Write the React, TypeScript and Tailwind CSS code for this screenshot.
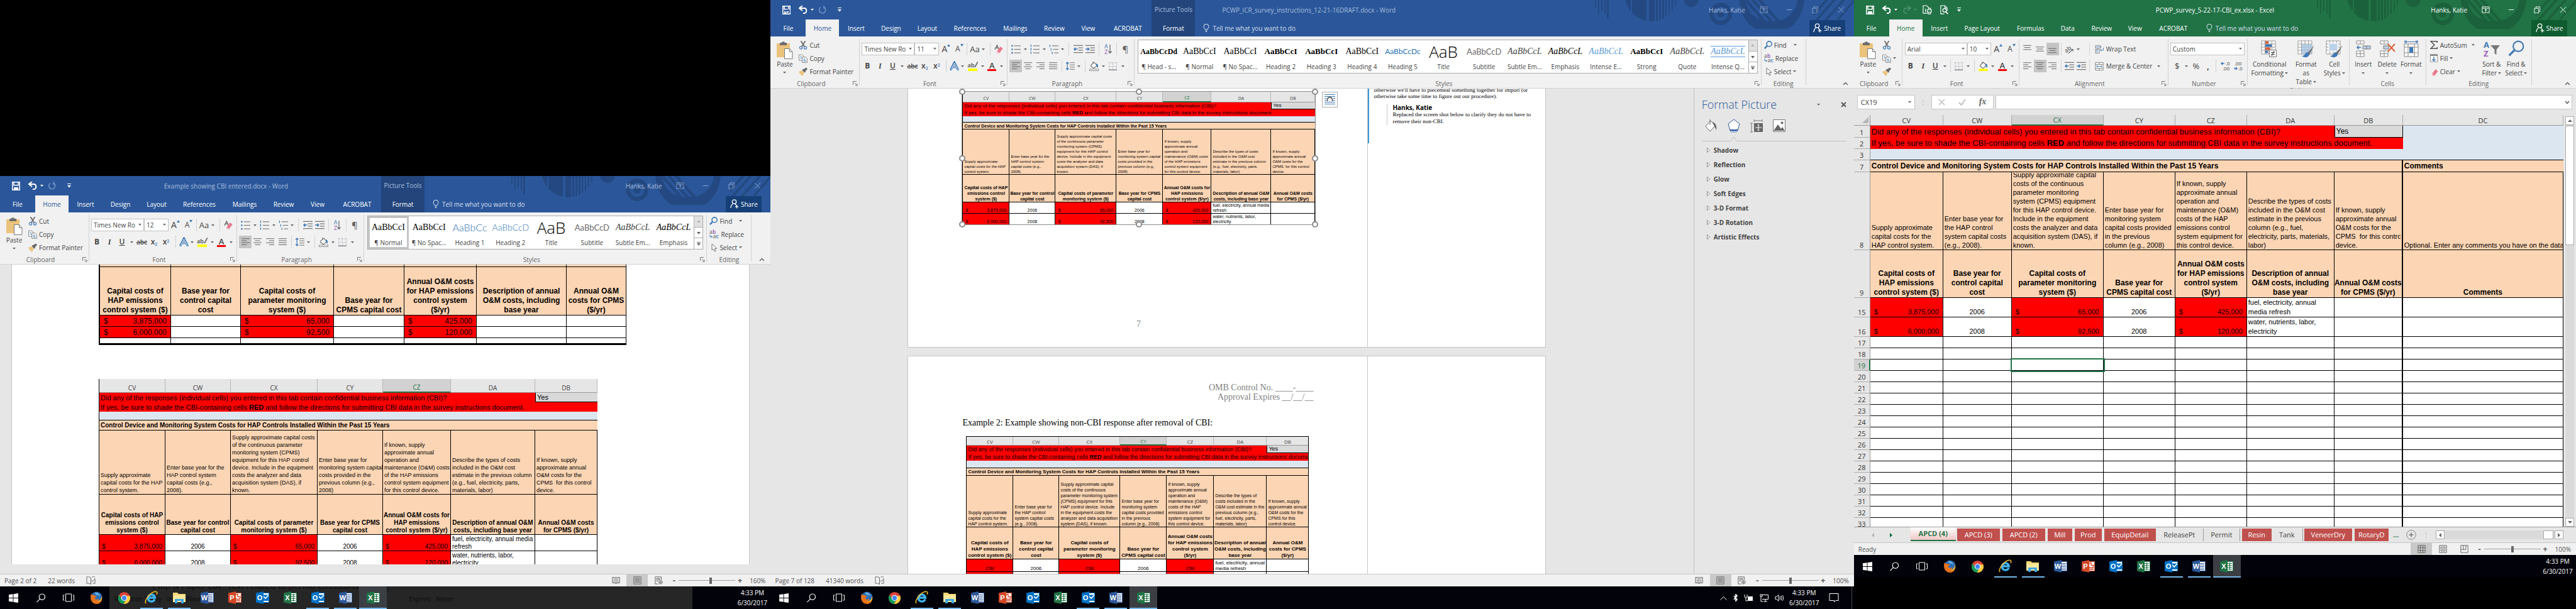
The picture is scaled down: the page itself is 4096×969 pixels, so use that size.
import React from "react";

type Kids = { children?: React.ReactNode };

/* ---------- small drawings ---------- */

const Svg = ({ w = 14, h = 14, vb = "0 0 16 16", children }: Kids & { w?: number; h?: number; vb?: string }) => (
  <svg width={w} height={h} viewBox={vb} fill="none" className="shrink-0" aria-hidden="true">
    {children}
  </svg>
);

const Caret = ({ color = "#6a6a6a" }: { color?: string }) => (
  <Svg w={5} h={3} vb="0 0 5 3">
    <path d="M0 0h5L2.5 3z" fill={color} />
  </Svg>
);

const Launcher = () => (
  <button aria-label="More options" className="flex h-[14px] w-3 items-center justify-center">
    <Svg w={8} h={8} vb="0 0 8 8">
      <path d="M.5 6V.5H6M3 3l3.5 3.5M7 4v3.2H4" stroke="#777" />
    </Svg>
  </button>
);

const SaveIcon = ({ sync = false }) => (
  <Svg w={13} h={14} vb="0 0 13 14">
    <path d="M.8.8h11.4v12.4H.8zM3 .8v5h7v-5" stroke="#fff" strokeWidth="1.5" />
    <path d="M3 9h7v4H3z" fill="#fff" />
    {sync && <circle cx="8.5" cy="9" r="3" stroke="#2b579a" strokeWidth="1.2" />}
  </Svg>
);

const UndoIcon = () => (
  <Svg w={14} h={13} vb="0 0 14 13">
    <path d="M2 4h6.5c5 0 5 8 .5 8H7" stroke="#fff" strokeWidth="2" />
    <path d="M6 0L1 4l5 4" stroke="#fff" strokeWidth="2" />
  </Svg>
);

const RepeatIcon = () => (
  <Svg w={13} h={13} vb="0 0 13 13">
    <path d="M4 2.5a5 5 0 1 0 5-.2M9 0v4h3" stroke="#6f90c4" strokeWidth="1.6" />
  </Svg>
);

const RedoIcon = () => (
  <Svg w={14} h={13} vb="0 0 14 13">
    <path d="M12 4H6c-5 0-5 8 0 8h1M8 0l5 4-5 4" stroke="#4f9270" strokeWidth="1.6" />
  </Svg>
);

const PrintIcon = () => (
  <Svg w={15} h={15}>
    <path d="M8 14H1V1h6l3 3v3M5 6v6M8 8h7v4H8zM9.500 12h4v3h-4zM9.500 5.500h4V8" stroke="#fff" strokeWidth="1.2" />
  </Svg>
);

const PreviewIcon = () => (
  <Svg w={15} h={15}>
    <path d="M8 15H2V1h7l4 4v5M9 1v4h4" stroke="#fff" strokeWidth="1.2" />
    <circle cx="8.500" cy="9" r="3" stroke="#fff" strokeWidth="1.4" />
    <path d="M10.500 11.500l4 3.500" stroke="#fff" strokeWidth="1.8" />
  </Svg>
);

const CustomizeIcon = () => (
  <Svg w={6} h={7} vb="0 0 6 7">
    <path d="M0 .5h6" stroke="#fff" />
    <path d="M0 3h6L3 6.500z" fill="#fff" />
  </Svg>
);

const BulbIcon = () => (
  <Svg w={10} h={13} vb="0 0 10 13">
    <path d="M3.200 9C3 7.500 1 6.500 1 4.300a4 4 0 0 1 8 0C9 6.500 7 7.500 6.800 9zM3.500 11h3M4 12.500h2" stroke="#dfe7f3" />
  </Svg>
);

const ShareIcon = () => (
  <Svg w={14} h={15} vb="0 0 14 15">
    <circle cx="6.500" cy="4" r="3.200" stroke="#fff" strokeWidth="1.300" />
    <path d="M1 14c0-3.500 1.500-5.500 3.500-6.500M8 7l1.500 3M10.500 9v5.500M7.800 11.800h5.500" stroke="#fff" strokeWidth="1.300" />
  </Svg>
);

const PasteIcon = () => (
  <Svg w={26} h={28} vb="0 0 26 28">
    <path d="M0 3h21v22H0z" fill="#ecc37c" />
    <path d="M5 2h3c0-2.500 5-2.500 5 0h3v4H5z" fill="#6d6d6d" />
    <path d="M12.500 11.500h8l4.500 5v11H12.500z" fill="#fff" stroke="#7a7a7a" />
    <path d="M20.500 11.500v5H25" stroke="#7a7a7a" />
  </Svg>
);

const CutIcon = () => (
  <Svg>
    <path d="M4 0l6.500 10.500M12 0L5.500 10.500" stroke="#6b6b6b" strokeWidth="2" />
    <circle cx="4" cy="12.500" r="2.400" stroke="#3f78b5" strokeWidth="1.400" />
    <circle cx="12" cy="12.500" r="2.400" stroke="#3f78b5" strokeWidth="1.400" />
  </Svg>
);

const CopyIcon = () => (
  <Svg>
    <path d="M.5 1.500h6l2 2v8h-8z" fill="#fff" stroke="#777" />
    <path d="M6.500 5.500h6l3 3v7h-9z" fill="#fff" stroke="#777" />
    <path d="M2.500 5h3M2.500 7.500h3M8.500 9h3M8.500 11h5M8.500 13h5" stroke="#3f78b5" />
  </Svg>
);

const PainterIcon = () => (
  <Svg>
    <path d="M0 8l6-2 4 4-3 6c-3-2-5-4-7-8z" fill="#ecc37c" />
    <path d="M6 5l5 5 2-2-1-1 4-4-2.500-2.500-4 3L8.500 3z" fill="#666" />
  </Svg>
);

const EraserIcon = ({ letter = true }) => (
  <Svg>
    {letter && <path d="M1 9l4-8 3 7M2.500 6h4" stroke="#6b6b6b" strokeWidth="1.500" />}
    <path d="M11 3.500l4.500 3.500-6 8L5 11.500z" fill="#e8798f" />
    <path d="M5 11.500L9.500 15l-1 1H6l-2-2z" fill="#f4b6c2" />
  </Svg>
);

const bulletRows = [2, 8, 14];
const ListIcon = ({ kind }: { kind: "bullet" | "number" | "multi" }) => (
  <Svg w={15} h={15}>
    {bulletRows.map((y, i) => (
      <g key={y}>
        <path d={kind === "multi" ? `M${5 + i * 2} ${y}h${11 - i * 2}` : `M5 ${y}h11`} stroke="#777" strokeWidth="1.200" />
        {kind === "bullet" ? (
          <circle cx="1.500" cy={y} r="1.400" fill="#3f78b5" />
        ) : (
          <path d={kind === "multi" ? `M${1.5 + i * 2} ${y - 2}v4` : `M.5 ${y - 1.5}h1v3.500`} stroke="#3f78b5" strokeWidth="1.200" />
        )}
      </g>
    ))}
  </Svg>
);

const IndentIcon = ({ out = false }) => (
  <Svg w={15} h={15}>
    <path d="M0 1.500h16M8 5.500h8M8 9.500h8M0 13.500h16" stroke="#777" strokeWidth="1.200" />
    <path d={out ? "M7 7.500H1M3.500 5L1 7.500 3.500 10" : "M0 7.500h6M3.500 5L6 7.500 3.500 10"} stroke="#3f78b5" strokeWidth="1.600" />
  </Svg>
);

const alignPaths = {
  left: "M0 1.500h16M0 5.500h10M0 9.500h16M0 13.500h10",
  center: "M0 1.500h16M3 5.500h10M0 9.500h16M3 13.500h10",
  right: "M0 1.500h16M6 5.500h10M0 9.500h16M6 13.500h10",
  justify: "M0 1.500h16M0 5.500h16M0 9.500h16M0 13.500h16",
  top: "M0 1h16M2 5h12M0 9h16",
  middle: "M0 4h16M2 8h12M0 12h16",
  bottom: "M0 7h16M2 11h12M0 15h16",
};
const AlignIcon = ({ kind }: { kind: keyof typeof alignPaths }) => (
  <Svg w={13}>
    <path d={alignPaths[kind]} stroke="#666" strokeWidth="1.200" />
  </Svg>
);

const SortIcon = () => (
  <span className="flex items-center">
    <span className="flex flex-col text-[9px] leading-[9px]">
      <span className="text-[#3f78b5]">A</span>
      <span className="text-[#8c4fb0]">Z</span>
    </span>
    <Svg w={6} h={15} vb="0 0 6 15">
      <path d="M3 0v13M.5 10.500L3 13.500l2.500-3" stroke="#666" strokeWidth="1.200" />
    </Svg>
  </span>
);

const SpacingIcon = () => (
  <Svg w={14} h={16}>
    <path d="M7 2h9M7 6h9M7 10h9M7 14h9" stroke="#777" strokeWidth="1.200" />
    <path d="M2.500 1v14M0 4l2.500-3L5 4M0 12l2.500 3L5 12" stroke="#3f78b5" strokeWidth="1.400" />
  </Svg>
);

const BucketIcon = ({ color = "#fff" }: { color?: string }) => (
  <Svg w={16} h={16}>
    <path d="M6 1v4M3 6.500L7.500 2l5 5L7 12 2.500 8z" fill="#fff" stroke="#777" strokeWidth="1.200" />
    <path d="M11 4c3 1 3.500 3 2.500 7L11 8z" fill="#3f78b5" />
    <path d="M.5 13h14v2.500H.5z" fill={color} stroke={color === "#fff" ? "#888" : color} />
  </Svg>
);

const BordersIcon = () => (
  <Svg w={13} h={13}>
    <path d="M1 0v16M8 0v16M15 0v16M0 1h16M0 8h16" stroke="#8d7c9c" strokeDasharray="1 1.500" />
    <path d="M0 15h16" stroke="#666" strokeWidth="1.400" />
  </Svg>
);

const SearchIcon = ({ big = false }) => (
  <Svg w={big ? 26 : 13} h={big ? 26 : 13}>
    <circle cx="10" cy="6" r="5" stroke="#3f78b5" strokeWidth={big ? 1.3 : 2} />
    <path d="M6.500 9.500L1 15" stroke="#3f78b5" strokeWidth={big ? 2 : 3} />
  </Svg>
);

const ReplaceIcon = () => (
  <Svg w={15} h={15}>
    <text x="0" y="7" fontSize="9" fontFamily="Open Sans" fontWeight="600" fill="#777">a<tspan fill="#8c4fb0">b</tspan></text>
    <text x="6" y="15" fontSize="9" fontFamily="Open Sans" fontWeight="600" fill="#777">a<tspan fill="#3f78b5">c</tspan></text>
    <path d="M1 9v3.500h4M3 11l2 1.500L3 14" stroke="#3f78b5" />
  </Svg>
);

const PointerIcon = () => (
  <Svg w={10} h={14} vb="0 0 10 14">
    <path d="M1 1v10l2.500-2 2 4 1.500-.7L5.500 8.500H9z" fill="#fff" stroke="#777" />
  </Svg>
);

const BrushIcon = () => (
  <g>
    <path d="M27 8l-11 12 3 3z" fill="#777" />
    <path d="M16 19c-4 0-3 6-9 6 5 4 12 2 12-3z" fill="#3f78b5" />
  </g>
);

const GridArt = ({ kind }: { kind: "conditional" | "table" | "cell" }) => (
  <Svg w={28} h={28} vb="0 0 28 28">
    <path d="M1 1h22v21H1zM1 6h22M1 11h22M1 16h22M6.500 1v21M12 1v21M17.500 1v21" fill="#fff" stroke="#999" />
    {kind === "conditional" && (
      <g>
        <path d="M7 1.500h5v4H7zM7 11.500h8v4H7z" fill="#d9603b" />
        <path d="M7 6.500h10v4H7zM7 16.500h4v4H7z" fill="#3f78b5" />
        <path d="M13.500 15.500h11v11h-11z" fill="#fff" stroke="#777" />
        <path d="M16 19.500h6M16 22.500h6M21 17l-4 8" stroke="#444" strokeWidth="1.200" />
      </g>
    )}
    {kind === "table" && <path d="M7 6.500h16V22H7z" fill="#a9c4e2" opacity=".8" />}
    {kind === "cell" && <path d="M5 5h14v12H5z" fill="#bcd2eb" stroke="#fff" />}
    {kind !== "conditional" && <BrushIcon />}
  </Svg>
);

const CellsArt = ({ kind }: { kind: "insert" | "delete" | "format" }) => (
  <Svg w={28} h={28} vb="0 0 28 28">
    {kind === "format" ? (
      <g>
        <path d="M3 6h22v20H3zM3 11h22M3 20h22M9 6v20M19 6v20" fill="#fff" stroke="#888" />
        <path d="M11 11h6v9h-6z" fill="#3f78b5" />
        <path d="M4 2.500h20M4 0v5M24 0v5M7 .5l-3 2 3 2M21 .5l3 2-3 2" stroke="#3f78b5" />
      </g>
    ) : (
      <g>
        <path d="M3 1h12v5H3zM9 1v5M3 17h12v9H3zM9 17v9M3 21.500h12" fill="#fff" stroke="#888" />
        <path d={kind === "insert" ? "M13 9h12v5H13zM19 9v5" : "M8 9h8v5H8z"} fill="#bcd2eb" stroke="#777" />
        {kind === "insert" ? (
          <path d="M4 11.500h6M6.500 9L4 11.500 6.500 14" stroke="#3f78b5" strokeWidth="1.600" />
        ) : (
          <path d="M15 6l11 12M26 6L15 18" stroke="#d9603b" strokeWidth="2" />
        )}
      </g>
    )}
  </Svg>
);

const FilterArt = () => (
  <Svg w={28} h={28} vb="0 0 28 28">
    <text x="1" y="12" fontSize="13" fontWeight="700" fontFamily="Open Sans" fill="#3f78b5">A</text>
    <text x="1" y="26" fontSize="13" fontWeight="700" fontFamily="Open Sans" fill="#9a5fbc">Z</text>
    <path d="M12 8h15l-5.500 7v8l-3-2v-6z" fill="#777" />
  </Svg>
);

const WrapIcon = ({ merge = false }) => (
  <Svg w={14} h={15}>
    {merge ? (
      <g>
        <path d="M1 1h14v14H1zM1 4.500h14M1 11.500h14M8 1v3.500M8 11.500V15" fill="#fff" stroke="#777" />
        <path d="M3 8h10M5 6L3 8l2 2M11 6l2 2-2 2" stroke="#3f78b5" />
      </g>
    ) : (
      <g>
        <path d="M1 1h9v5H1zM1 8h7v7H1z" fill="#fff" stroke="#777" />
        <path d="M2 3.500h10M2 10h4M2 12.500h4M15.500 5v4.500H10M12 7.500l-2.500 2 2.500 2" stroke="#3f78b5" />
      </g>
    )}
  </Svg>
);

/* ---------- title bar ---------- */

const HeaderArt = () => (
  <svg width="415" height="58" viewBox="0 0 415 58" className="absolute right-0 top-0" aria-hidden="true">
    <defs>
      <clipPath id="disc"><circle cx="93" cy="-8" r="42" /></clipPath>
      <clipPath id="lens"><circle cx="284" cy="-6" r="41" /></clipPath>
    </defs>
    <g fill="#000" opacity=".15">
      <path d="M3 0h2v13H3zM8 0h2v22H8zM13 0h2v18h-2zM18 0h2v22h-2zM22 0h3v29h-3z" />
      <path clipPath="url(#disc)" d="M51 0h9v40h-9zM62 0h23v40H62zM89 0h9v40h-9zM100 0h3v40h-3zM105 0h3v40h-3zM110 0h3v40h-3zM115 0h2v40h-2zM120 0h2v40h-2zM125 0h2v40h-2zM130 0h2v40h-2z" />
      <circle cx="156" cy="-1" r="12" />
      <path fillRule="evenodd" d="M203 4a18 18 0 1 0 .1 0zM203 11a11 11 0 1 1-.1 0z" />
      <circle cx="203" cy="22" r="6" />
      <path d="M232 0c2 20 10 36 26 46h52c16-10 24-26 26-46h-11c-2 18-16 34-41 34s-40-16-41-34z" />
      <path clipPath="url(#lens)" d="M240 0h6l40 46h-6zM251 0h6l40 46h-6zM262 0h6l40 46h-6z" />
      <path d="M351 20L369 0h5l-23 26zM351 34L381 0h5l-35 40zM366 34L396 0h5l-32 36zM388 30l26-30h1v4l-24 28z" />
    </g>
  </svg>
);

const dim = "text-[#a8bddd]";

const WindowButtons = ({ color }: { color: string }) => (
  <div className="flex">
    {[
      ["Ribbon Display Options", "M1 2h12v10H1zM1 4.500h12M7 11V6M5 8l2-2 2 2"],
      ["Minimize", "M2 7h9"],
      ["Restore Down", "M2 4.500h7v8H2zM4.500 4.500V2h7v8H9"],
      ["Close", "M2 2l10 10M12 2L2 12"],
    ].map(([name, d]) => (
      <button key={name} aria-label={name} className="flex h-7 w-[41px] items-center justify-center">
        <Svg w={13} h={13} vb="0 0 14 14">
          <path d={d} stroke={color} />
        </Svg>
      </button>
    ))}
  </div>
);

type Tab = [string, string];

const Tabs = ({ tabs, active }: { tabs: Tab[]; active: string }) => (
  <nav className="flex h-[27px]">
    {tabs.map(([name, width]) => (
      <button key={name} className={`${width} ${name === "Home" ? active : "text-white"} h-full text-center`}>
        {name}
      </button>
    ))}
  </nav>
);

const TellMe = ({ share }: { share: string }) => (
  <div className="flex h-[27px] flex-1 items-center">
    <button className="flex items-center gap-[5px] pl-[13px] text-[#d3deee]">
      <BulbIcon />
      Tell me what you want to do
    </button>
    <button className={`relative ml-auto mr-[14px] flex h-[26px] w-[57px] items-center justify-center gap-[3px] text-white ${share}`}>
      <ShareIcon />
      Share
    </button>
  </div>
);

const wordTabs: Tab[] = [
  ["File", "w-[56px]"],
  ["Home", "w-[53px]"],
  ["Insert", "w-[54px]"],
  ["Design", "w-[57px]"],
  ["Layout", "w-[58px]"],
  ["References", "w-[78px]"],
  ["Mailings", "w-[66px]"],
  ["Review", "w-[58px]"],
  ["View", "w-[50px]"],
  ["ACROBAT", "w-[76px]"],
];

const WordHeader = ({ title, wide = false }: { title: string; wide?: boolean }) => (
  <header className="relative flex shrink-0 bg-[#2b579a]">
    <HeaderArt />
    <div className="w-[606px]">
      <div className="flex h-[31px] items-center">
        <button aria-label="Save" className="ml-[19px] w-[14px]"><SaveIcon sync={wide} /></button>
        <button aria-label="Undo" className="ml-3 w-[15px]"><UndoIcon /></button>
        <button aria-label="Undo list" className="w-3 pl-1"><Caret color="#fff" /></button>
        <button aria-label="Repeat" className="ml-1 w-[15px]"><RepeatIcon /></button>
        <button aria-label="Customize" className="ml-4 w-[10px]"><CustomizeIcon /></button>
        {!wide && <h1 className={`flex-1 pr-1 text-center ${dim}`}>{title}</h1>}
      </div>
      <Tabs tabs={wordTabs} active="bg-[#f1f1f1] text-[#2b579a]" />
    </div>
    <div className="w-[69px] bg-[#23457b] text-center">
      <p className={`h-[31px] leading-[31px] ${dim}`}>Picture Tools</p>
      <button className="h-[27px] w-full text-white">Format</button>
    </div>
    <div className="flex flex-1 flex-col">
      <div className="flex h-[31px] items-center">
        {wide && <h1 className={`ml-[43px] ${dim}`}>{title}</h1>}
        <span className={`relative ml-auto mr-[9px] ${dim}`}>Hanks, Katie</span>
        <WindowButtons color="#8ea7cf" />
      </div>
      <TellMe share="bg-[#163f78]" />
    </div>
  </header>
);

/* ---------- ribbon parts ---------- */

const Tool = ({ c, name, children }: Kids & { c: string; name: string }) => (
  <button aria-label={name} className={`flex h-5 shrink-0 items-center justify-center ${c}`}>
    {children}
  </button>
);

const Drop = ({ c }: { c: string }) => (
  <button aria-label="Options" className={`flex h-5 shrink-0 items-center justify-center ${c}`}>
    <Caret />
  </button>
);

const Bar = ({ c }: { c: string }) => (
  <span className={`flex h-5 shrink-0 justify-center ${c}`}>
    <span className="w-px bg-[#d2d2d2]" />
  </span>
);

const Divider = () => <span className="my-1 w-px shrink-0 bg-[#d2d2d2]" />;

const Group = ({ c, label, launcher = true, children }: Kids & { c: string; label: string; launcher?: boolean }) => (
  <section className={`flex flex-col ${c}`}>
    {children}
    <div className="mt-auto flex h-[15px] items-center text-[#666]">
      <span className="flex-1 text-center">{label}</span>
      {launcher && <Launcher />}
    </div>
  </section>
);

const Combo = ({ c, name, value }: { c: string; name: string; value: string }) => (
  <label className={`relative block h-5 shrink-0 ${c}`}>
    <select aria-label={name} className="h-5 w-full appearance-none border border-[#c3c3c3] bg-white pl-[3px] text-[#444]">
      <option>{value}</option>
    </select>
    <span className="pointer-events-none absolute right-1 top-2">
      <Caret />
    </span>
  </label>
);

const Grow = ({ up = false }) => (
  <span className={`flex items-start ${up ? "text-[14px]" : "text-[12px]"} leading-[16px]`}>
    A
    <Svg w={5} h={4} vb="0 0 5 4">
      <path d={up ? "M0 4h5L2.500 0z" : "M0 0h5L2.500 4z"} fill="#3f78b5" />
    </Svg>
  </span>
);

const FontColor = () => (
  <span className="flex flex-col items-center text-[13px] font-semibold leading-[12px]">
    A<span className="h-[3px] w-[14px] bg-[#ff0000]" />
  </span>
);

const PasteButton = () => (
  <button className="flex w-[45px] flex-col items-center pt-2">
    <PasteIcon />
    <span className="leading-[16px]">Paste</span>
    <span className="pt-1"><Caret /></span>
  </button>
);

const smallRow = "flex h-[21px] items-center gap-[3px]";

const styleNames: [string, string, string][] = [
  ["¶ Normal", "AaBbCcI", "font-['Liberation_Serif',serif] text-[14px] text-black"],
  ["¶ No Spac...", "AaBbCcI", "font-['Liberation_Serif',serif] text-[14px] text-black"],
  ["Heading 1", "AaBbCc", "font-['Lato',sans-serif] text-[16px] font-light text-[#2e74b5]"],
  ["Heading 2", "AaBbCcD", "font-['Lato',sans-serif] text-[14px] font-light text-[#2e74b5]"],
  ["Title", "AaB", "font-['Open_Sans',sans-serif] text-[26px] font-light text-black"],
  ["Subtitle", "AaBbCcD", "font-['Lato',sans-serif] text-[13px] text-[#6a6a6a]"],
  ["Subtle Em...", "AaBbCcL", "font-['Liberation_Serif',serif] text-[14px] italic text-[#444]"],
  ["Emphasis", "AaBbCcL", "font-['Liberation_Serif',serif] text-[14px] italic text-black"],
];

const wideStyleNames: [string, string, string][] = [
  ["¶ Head - s...", "AaBbCcDd", "font-['Liberation_Serif',serif] text-[12px] font-bold text-black"],
  ["¶ Normal", "AaBbCcI", "font-['Liberation_Serif',serif] text-[14px] text-black"],
  ["¶ No Spac...", "AaBbCcI", "font-['Liberation_Serif',serif] text-[14px] text-black"],
  ["Heading 2", "AaBbCcI", "font-['Liberation_Serif',serif] text-[13px] font-bold text-black"],
  ["Heading 3", "AaBbCcI", "font-['Liberation_Serif',serif] text-[13px] font-bold text-black"],
  ["Heading 4", "AaBbCcI", "font-['Liberation_Serif',serif] text-[14px] text-black"],
  ["Heading 5", "AaBbCcDc", "font-['Lato',sans-serif] text-[12px] text-[#2e74b5]"],
  ["Title", "AaB", "font-['Open_Sans',sans-serif] text-[26px] font-light text-black"],
  ["Subtitle", "AaBbCcD", "font-['Lato',sans-serif] text-[13px] text-[#6a6a6a]"],
  ["Subtle Em...", "AaBbCcL", "font-['Liberation_Serif',serif] text-[14px] italic text-[#444]"],
  ["Emphasis", "AaBbCcL", "font-['Liberation_Serif',serif] text-[14px] italic text-black"],
  ["Intense E...", "AaBbCcL", "font-['Liberation_Serif',serif] text-[14px] italic text-[#5b9bd5]"],
  ["Strong", "AaBbCcI", "font-['Liberation_Serif',serif] text-[13px] font-bold text-black"],
  ["Quote", "AaBbCcL", "font-['Liberation_Serif',serif] text-[14px] italic text-[#444]"],
  ["Intense Q...", "AaBbCcL", "font-['Liberation_Serif',serif] text-[14px] italic text-[#5b9bd5] border-y border-[#5b9bd5]"],
];

const Gallery = ({ wide }: { wide: boolean }) => (
  <div className="mx-[5px] mt-[5px] flex h-[54px] border border-[#ababab] bg-white">
    <div className="flex flex-1">
      {(wide ? wideStyleNames : styleNames).map(([name, sample, look], i) => (
        <button
          key={name}
          className={`flex flex-1 flex-col items-center justify-between py-[3px] ${!wide && i === 0 ? "outline-3 -outline-offset-3 outline-[#c5c5c5]" : ""}`}
        >
          <span className={`mt-[6px] flex h-[18px] items-center whitespace-nowrap leading-[18px] ${look}`}>{sample}</span>
          <span className="leading-[14px]">{name}</span>
        </button>
      ))}
    </div>
    <div className="flex w-[14px] flex-col divide-y divide-[#ababab] border-l border-[#ababab]">
      {["Row up", "Row down", "More styles"].map((n, i) => (
        <button key={n} aria-label={n} className={`flex flex-1 items-center justify-center ${i === 0 ? "bg-[#e1e1e1]" : ""}`}>
          <Svg w={6} h={6} vb="0 0 6 6">
            <path d={i === 0 ? "M0 5h6L3 1z" : "M0 2h6L3 6z"} fill={i === 0 ? "#b5b5b5" : "#666"} />
            {i === 2 && <path d="M0 .5h6" stroke="#666" />}
          </Svg>
        </button>
      ))}
    </div>
  </div>
);

const CollapseButton = ({ c }: { c: string }) => (
  <div className={`flex shrink-0 items-end justify-end pb-1 ${c}`}>
    <button aria-label="Collapse the Ribbon">
      <Svg w={9} h={6} vb="0 0 9 6">
        <path d="M1 5l3.500-3.500L8 5" stroke="#666" strokeWidth="1.500" />
      </Svg>
    </button>
  </div>
);

const ribbon = "flex h-[83px] shrink-0 border-b border-[#d2d2d2] bg-[#f1f1f1] text-[#444]";

const WordRibbon = ({ size, wide = false }: { size: string; wide?: boolean }) => (
  <div className={ribbon}>
    <Group c="w-[141px]" label="Clipboard">
      <div className="flex">
        <PasteButton />
        <div className="pt-[3px]">
          <button className={smallRow}><CutIcon />Cut</button>
          <button className={smallRow}><CopyIcon />Copy</button>
          <button className={smallRow}><PainterIcon />Format Painter</button>
        </div>
      </div>
    </Group>
    <Divider />
    <Group c="w-[234px]" label="Font">
      <div className="flex pl-[3px] pt-[10px]">
        <Combo c="w-[84px]" name="Font" value="Times New Ro" />
        <Combo c="w-[39px]" name="Font size" value={size} />
        <Tool c="w-[22px]" name="Grow Font"><Grow up /></Tool>
        <Tool c="w-[20px]" name="Shrink Font"><Grow /></Tool>
        <Bar c="w-[5px]" />
        <Tool c="w-[19px]" name="Change Case"><span className="text-[13px]">Aa</span></Tool>
        <Drop c="w-[9px]" />
        <Bar c="w-[12px]" />
        <Tool c="w-[16px]" name="Clear Formatting"><EraserIcon /></Tool>
      </div>
      <div className="flex pl-[3px] pt-[7px] text-[12px]">
        <Tool c="w-[18px]" name="Bold"><b>B</b></Tool>
        <Tool c="w-[22px]" name="Italic"><i className="font-['Liberation_Serif',serif] font-bold">I</i></Tool>
        <Tool c="w-[18px]" name="Underline"><u className="font-semibold">U</u></Tool>
        <Drop c="w-[12px]" />
        <Tool c="w-[21px]" name="Strikethrough"><s className="text-[10px] font-semibold">abc</s></Tool>
        <Tool c="w-[18px]" name="Subscript"><span className="font-semibold">x<sub className="text-[7px] text-[#3f78b5]">2</sub></span></Tool>
        <Tool c="w-[20px]" name="Superscript"><span className="font-semibold">x<sup className="text-[7px] text-[#3f78b5]">2</sup></span></Tool>
        <Bar c="w-[10px]" />
        <Tool c="w-[16px]" name="Text Effects">
          <Svg w={15} h={16}>
            <path d="M2 14L8 2l6 12M4.500 10h7" stroke="#8db8e6" strokeWidth="4" strokeLinecap="round" />
            <path d="M2 14L8 2l6 12M4.500 10h7" stroke="#2e64a0" strokeWidth="2.400" />
            <path d="M2.500 13.500L8 3l5.500 10.500M5 10h6" stroke="#fff" />
          </Svg>
        </Tool>
        <Drop c="w-[10px]" />
        <Tool c="w-[23px]" name="Highlight">
          <span className="flex flex-col items-center text-[9px] font-semibold leading-[11px]">
            <span className="flex">ab<Svg w={6} h={10} vb="0 0 6 10"><path d="M6 0L1 9" stroke="#777" strokeWidth="2" /></Svg></span>
            <span className="h-[4px] w-[15px] bg-[#ffff00]" />
          </span>
        </Tool>
        <Drop c="w-[9px]" />
        <Tool c="w-[20px]" name="Font Color"><FontColor /></Tool>
        <Drop c="w-[10px]" />
      </div>
    </Group>
    <Divider />
    <Group c="w-[201px]" label="Paragraph">
      <div className="flex pl-[3px] pt-[10px]">
        <Tool c="w-[20px]" name="Bullets"><ListIcon kind="bullet" /></Tool>
        <Drop c="w-[10px]" />
        <Tool c="w-[21px]" name="Numbering"><ListIcon kind="number" /></Tool>
        <Drop c="w-[9px]" />
        <Tool c="w-[20px]" name="Multilevel List"><ListIcon kind="multi" /></Tool>
        <Drop c="w-[9px]" />
        <Bar c="w-[11px]" />
        <Tool c="w-[18px]" name="Decrease Indent"><IndentIcon out /></Tool>
        <Tool c="w-[20px]" name="Increase Indent"><IndentIcon /></Tool>
        <Bar c="w-[9px]" />
        <Tool c="w-[19px]" name="Sort"><SortIcon /></Tool>
        <Bar c="w-[9px]" />
        <Tool c="w-[18px]" name="Show marks"><span className="text-[15px] text-[#666]">¶</span></Tool>
      </div>
      <div className="flex pl-[3px] pt-[7px]">
        <Tool c="w-[20px] bg-[#c5c5c5]" name="Align Left"><AlignIcon kind="left" /></Tool>
        <Tool c="w-[19px]" name="Center"><AlignIcon kind="center" /></Tool>
        <Tool c="w-[20px]" name="Align Right"><AlignIcon kind="right" /></Tool>
        <Tool c="w-[20px]" name="Justify"><AlignIcon kind="justify" /></Tool>
        <Bar c="w-[9px]" />
        <Tool c="w-[18px]" name="Line Spacing"><SpacingIcon /></Tool>
        <Drop c="w-[9px]" />
        <Bar c="w-[11px]" />
        <Tool c="w-[18px]" name="Shading"><BucketIcon /></Tool>
        <Drop c="w-[10px]" />
        <Tool c="w-[21px]" name="Borders"><BordersIcon /></Tool>
        <Drop c="w-[10px]" />
      </div>
    </Group>
    <Divider />
    <Group c="min-w-0 flex-1" label="Styles">
      <Gallery wide={wide} />
    </Group>
    <Divider />
    <Group c="w-[70px]" label="Editing" launcher={false}>
      <div className="pl-1 pt-[3px]">
        <button className={smallRow}><SearchIcon />Find<span className="pl-2"><Caret /></span></button>
        <button className={smallRow}><ReplaceIcon />Replace</button>
        <button className={`${smallRow} pl-[3px]`}><PointerIcon />Select<Caret /></button>
      </div>
    </Group>
    <Divider />
    <CollapseButton c={wide ? "w-[76px] pr-[9px]" : "w-[30px] pr-[9px]"} />
  </div>
);

/* ---------- status bar and task bar ---------- */

const Zoom = ({ icons, on, zoom, pos }: { icons: string[]; on: number; zoom: string; pos: number }) => (
  <div className="ml-auto flex items-center pr-2">
    {icons.map((d, i) => (
      <button key={d} aria-label={`View ${i + 1}`} className={`flex h-[19px] w-[34px] items-center justify-center ${i === on ? "bg-[#c9c9c9]" : ""}`}>
        <Svg w={13} h={13}>
          <path d={d} stroke="#666" strokeWidth="1.200" />
        </Svg>
      </button>
    ))}
    <button aria-label="Zoom out" className="w-[15px] text-center text-[13px] font-bold leading-[15px]">-</button>
    <input
      type="range"
      aria-label="Zoom"
      defaultValue={pos}
      className="h-[14px] w-[90px] appearance-none bg-[linear-gradient(#a0a0a0,#a0a0a0)] bg-[length:100%_1px] bg-center bg-no-repeat [&::-webkit-slider-thumb]:h-[10px] [&::-webkit-slider-thumb]:w-[4px] [&::-webkit-slider-thumb]:appearance-none [&::-webkit-slider-thumb]:bg-[#666]"
    />
    <button aria-label="Zoom in" className="w-[14px] text-center text-[13px] font-bold leading-[15px]">+</button>
    <span className="w-[34px] text-right">{zoom}</span>
  </div>
);

const statusBar = "flex h-[20px] shrink-0 items-center border-t border-[#c6c6c6] bg-[#f1f1f1] text-[#555]";
const wordViews = [
  "M8 2v13M1 2h5l2 1 2-1h5v11h-5l-2 1-2-1H1zM3 5h3M3 8h3M3 11h3M10 5h3M10 8h3M10 11h3",
  "M1 1h14v14H1zM3 4h10M3 6.500h10M3 9h10M3 11.500h10",
  "M7 15H1V1h12v6M3 4h8M3 6.500h8M3 9h4M11.500 8a3.500 3.500 0 1 0 .1 0M9 12h5M11.500 9v5",
];

const WordStatus = ({ page, words, zoom, pos }: { page: string; words: string; zoom: string; pos: number }) => (
  <footer className={statusBar}>
    <span className="pl-[7px]">{page}</span>
    <span className="pl-[18px] pr-[18px]">{words}</span>
    <Svg w={15} h={15}>
      <path d="M8 3v12M1 2h4l3 1.500v11L5 13H1zM10 2h5M15 5v8h-4M9 8l2 2 4-5" stroke="#666" />
    </Svg>
    <Zoom icons={wordViews} on={1} zoom={zoom} pos={pos} />
  </footer>
);

const OfficeIcon = ({ letter, color }: { letter: string; color: string }) => (
  <Svg w={21} h={20} vb="0 0 21 20">
    <path d="M10 2.500h10.500v15H10z" fill="#fff" stroke={color} />
    {letter === "W" && <path d="M12 5.500h7M12 8h7M12 10.500h7M12 13h7M12 15.500h7" stroke={color} strokeWidth="1.200" />}
    {letter === "X" && <path d="M12 5.500h7M12 8.500h7M12 11.500h7M12 14.500h7M15.500 4v12" stroke={color} strokeWidth="1.200" />}
    {letter === "P" && <path d="M12 12.500h7M12 15h7M15 4.500v4h4a4 4 0 1 1-4-4z" stroke={color} strokeWidth="1.300" />}
    {letter === "O" && <path d="M10.500 5.500H20V15h-9.500z" fill={color} />}
    {letter === "O" && <path d="M11 7l4 4 5-5" stroke="#fff" strokeWidth="1.600" />}
    <path d="M0 2.500L12 0v20L0 17.500z" fill={color} />
    <text x="6" y="14" textAnchor="middle" fontSize="11" fontWeight="700" fontFamily="Liberation Sans" fill="#fff">{letter}</text>
  </Svg>
);

const Firefox = () => (
  <Svg w={21} h={21} vb="0 0 22 22">
    <circle cx="11" cy="10" r="9.500" fill="#2f6fb7" />
    <path d="M8 2c4 0 8 2 9 6-3-3-5-2-6-2z" fill="#6fc0ea" />
    <path d="M2 4c1 2 2 2 4 2 1 1 4 1 5 2 0 1-2 1-3 3 1 3 5 3 7 1 0 3-2 4-4 4 5 1 9-3 8-9 3 7-1 14-8 14S-1 14 2 4z" fill="#e8731a" />
    <path d="M19 7c1 6-3 10-8 9 3 2 8 1 9-4z" fill="#f7c325" />
  </Svg>
);

const Chrome = () => (
  <Svg w={21} h={21} vb="0 0 22 22">
    <circle cx="11" cy="11" r="10" fill="#db4437" />
    <path d="M2.300 6A10 10 0 0 0 10 21l4-7.500-6 0z" fill="#0f9d58" />
    <path d="M10 21A10 10 0 0 0 20.300 7.500H11l3.500 6z" fill="#ffcd40" />
    <circle cx="11" cy="11" r="5" fill="#fff" />
    <circle cx="11" cy="11" r="3.800" fill="#4285f4" />
  </Svg>
);

const Explorer = () => (
  <Svg w={21} h={20} vb="0 0 21 20">
    <path d="M0 2h7l2 2h11v13H0z" fill="#f7d774" />
    <path d="M0 6h20v11H0z" fill="#fbe69a" />
    <path d="M3 19v-7h14v7h-4v-4H7v4z" fill="#3fa9e6" />
  </Svg>
);

const Edge = () => (
  <Svg w={22} h={22} vb="0 0 22 22">
    <path d="M16 13.500a5.500 5.500 0 1 1 .3-2.500H6" stroke="#3fb4ee" strokeWidth="3.400" />
    <path d="M2 20c-3-4 5-15 12-18 5-2 7 0 5 4" stroke="#f0b82c" strokeWidth="1.600" />
  </Svg>
);

const StartIcon = () => (
  <Svg w={15} h={15}>
    <path d="M0 2.500L7 1.400V7.500H0zM8 1.200L16 0v7.500H8zM0 8.500h7v6.100l-7-1zM8 8.500h8V16l-8-1.200z" fill="#fff" />
  </Svg>
);

const pins: [string, React.ReactNode, string][] = [
  ["Firefox", <Firefox />, ""],
  ["Chrome", <Chrome />, ""],
  ["Internet Explorer", <Edge />, "open"],
  ["File Explorer", <Explorer />, "open"],
  ["Word", <OfficeIcon letter="W" color="#2b579a" />, ""],
  ["PowerPoint", <OfficeIcon letter="P" color="#d24726" />, ""],
  ["Outlook", <OfficeIcon letter="O" color="#0072c6" />, ""],
  ["Excel", <OfficeIcon letter="X" color="#217346" />, ""],
  ["Outlook windows", <OfficeIcon letter="O" color="#0072c6" />, "open"],
  ["Word windows", <OfficeIcon letter="W" color="#2b579a" />, "open"],
  ["Excel windows", <OfficeIcon letter="X" color="#217346" />, "active"],
];

const Taskbar = ({ ghost = false, tray = false }) => (
  <footer className="relative flex h-9 shrink-0 overflow-hidden bg-[#02030a] text-white">
    {ghost && (
      <div className="absolute left-[174px] right-[124px] top-0 h-9 bg-[#262626] text-[#0c0c0c]">
        <p className="flex h-[7px] items-end overflow-hidden pl-[68px] text-[14px] leading-[16px]">Pulp &amp; Paper EIA - text related to period emissions testing</p>
        <p className="flex gap-[9px] pl-2 pt-[6px]">
          <span>Retention Policy</span>
          <span className="w-[376px]">Inbox (Never)</span>
          <span>Expires</span>
          <span>Never</span>
        </p>
      </div>
    )}
    <button aria-label="Start" className="flex w-[43px] items-center justify-center"><StartIcon /></button>
    <button aria-label="Search" className="flex w-[43px] items-center justify-center">
      <Svg w={16} h={15}>
        <circle cx="10" cy="6" r="5" stroke="#fff" strokeWidth="1.200" />
        <path d="M6.500 9.500L1 15" stroke="#fff" strokeWidth="1.200" />
      </Svg>
    </button>
    <button aria-label="Task View" className="flex w-[45px] items-center justify-center">
      <Svg w={18} h={14} vb="0 0 18 14">
        <path d="M4.500 1h9v12h-9zM2.500 3H.5v8h2M15.500 3h2v8h-2" stroke="#fff" />
      </Svg>
    </button>
    {pins.map(([name, icon, state]) => (
      <button key={name} aria-label={name} className={`relative flex w-[44px] items-center justify-center ${state === "active" ? "bg-[#3b3f44]" : ""}`}>
        {icon}
        {state === "open" && <span className="absolute bottom-0 left-1 h-[2px] w-9 bg-[#76b9ed]" />}
        {state === "active" && <span className="absolute bottom-0 left-0 h-[2px] w-full bg-[#76b9ed]" />}
      </button>
    ))}
    <div className="ml-auto flex items-center">
      {tray && (
        <div className="flex w-[102px] items-center justify-between">
          <Svg w={11} h={7} vb="0 0 11 7"><path d="M.5 6.500l5-5 5 5" stroke="#fff" /></Svg>
          <Svg w={8} h={14} vb="0 0 8 14"><path d="M4 1v12M1 4l5 6-2 2M1 10l5-6-2-2" stroke="#fff" strokeWidth="1.600" /></Svg>
          <Svg w={15} h={12} vb="0 0 15 12"><path d="M1 1v3a2 2 0 0 0 4 0V1M3 6v5h3" stroke="#fff" /><path d="M6 4h8v7H6z" fill="#fff" /></Svg>
          <Svg w={14} h={13} vb="0 0 14 13"><path d="M4 1.500h9.500v7H4M1 1h3v3H1zM2 4v8h3M9 8.500V12M6 12h6" stroke="#fff" /></Svg>
          <Svg w={15} h={13} vb="0 0 15 13"><path d="M1 4.500h2l3-3v10l-3-3H1zM8 4q1.500 2.500 0 5M10 3q2.500 3.500 0 7M12 2q3.500 4.500 0 9" stroke="#fff" /></Svg>
        </div>
      )}
      <time className={`${tray ? "w-[64px]" : "w-[58px]"} text-center leading-[16px]`}>
        4:33 PM
        <br />
        6/30/2017
      </time>
      {tray && (
        <button aria-label="Notifications" className="flex h-9 w-[44px] items-center justify-center border-r border-[#444] pr-[13px] mr-[3px]">
          <Svg w={16} h={16}><path d="M1 1.500h14v11h-4L8.500 15v-2.500H1z" stroke="#fff" /></Svg>
        </button>
      )}
    </div>
  </footer>
);

/* ---------- cost tables ---------- */

const letters = ["CV", "CW", "CX", "CY", "CZ", "DA", "DB"];
const question = "Did any of the responses (individual cells) you entered in this tab contain confidential business information (CBI)?";
const direction = (
  <>
    If yes, be sure to shade the CBI-containing cells <b>RED</b> and follow the directions for submitting CBI data in the survey instructions document.
  </>
);
const heading = "Control Device and Monitoring System Costs for HAP Controls Installed Within the Past 15 Years";

const wideHelp = [
  "Supply approximate\ncapital costs for the HAP\ncontrol system.",
  "Enter base year for the\nHAP control system\ncapital costs (e.g.,\n2008).",
  "Supply approximate capital costs\nof the continuous parameter\nmonitoring system (CPMS)\nequipment for this HAP control\ndevice. Include in the equipment\ncosts the analyzer and data\nacquisition system (DAS), if\nknown.",
  "Enter base year for\nmonitoring system capital\ncosts provided in the\nprevious column (e.g.,\n2008)",
  "If known, supply\napproximate annual\noperation and\nmaintenance (O&M) costs\nof the HAP emissions\ncontrol system equipment\nfor this control device.",
  "Describe the types of costs\nincluded in the O&M cost\nestimate in the previous column\n(e.g., fuel, electricity, parts,\nmaterials, labor)",
  "If known, supply\napproximate annual\nO&M costs for the\nCPMS  for this control\ndevice.",
];

const wideTitles = [
  "Capital costs of HAP\nemissions control\nsystem ($)",
  "Base year for control\ncapital cost",
  "Capital costs of parameter\nmonitoring system ($)",
  "Base year for CPMS\ncapital cost",
  "Annual O&M costs for\nHAP emissions\ncontrol system ($/yr)",
  "Description of annual O&M\ncosts, including base year",
  "Annual O&M costs\nfor CPMS ($/yr)",
];

const narrowHelp = [
  "Supply approximate\ncapital costs for the\nHAP control system.",
  "Enter base year for\nthe HAP control\nsystem capital costs\n(e.g., 2008).",
  "Supply approximate capital\ncosts of the continuous\nparameter monitoring system\n(CPMS) equipment for this\nHAP control device. Include\nin the equipment costs the\nanalyzer and data acquisition\nsystem (DAS), if known.",
  "Enter base year for\nmonitoring system\ncapital costs provided\nin the previous\ncolumn (e.g., 2008)",
  "If known, supply\napproximate annual\noperation and\nmaintenance (O&M)\ncosts of the HAP\nemissions control\nsystem equipment for\nthis control device.",
  "Describe the types of\ncosts included in the\nO&M cost estimate in the\nprevious column (e.g.,\nfuel, electricity, parts,\nmaterials, labor)",
  "If known, supply\napproximate annual\nO&M costs for the\nCPMS for this\ncontrol device.",
];

const excelHelp = [
  narrowHelp[0],
  narrowHelp[1],
  "Supply approximate capital\ncosts of the continuous\nparameter monitoring\nsystem (CPMS) equipment\nfor this HAP control device.\nInclude in the equipment\ncosts the analyzer and data\nacquisition system (DAS), if\nknown.",
  narrowHelp[3],
  narrowHelp[4],
  "Describe the types of costs\nincluded in the O&M cost\nestimate in the previous\ncolumn (e.g., fuel,\nelectricity, parts, materials,\nlabor)",
  wideHelp[6],
];

const narrowTitles = [
  "Capital costs of\nHAP emissions\ncontrol system ($)",
  "Base year for\ncontrol capital\ncost",
  "Capital costs of\nparameter monitoring\nsystem ($)",
  "Base year for\nCPMS capital cost",
  "Annual O&M costs\nfor HAP emissions\ncontrol system\n($/yr)",
  "Description of annual\nO&M costs, including\nbase year",
  "Annual O&M\ncosts for CPMS\n($/yr)",
];

const wideRows = [
  ["$3,875,000", "2006", "$65,000", "2006", "$425,000", "fuel, electricity, annual media\nrefresh", ""],
  ["$6,000,000", "2008", "$92,500", "2008", "$120,000", "water, nutrients, labor,\nelectricity", ""],
];

const excelRows = [
  ["$3,875,000", "2006", "$65,000", "2006", "$425,000", "fuel, electricity, annual\nmedia refresh", ""],
  wideRows[1],
];

const cbiRows = [
  ["CBI", "2006", "CBI", "2006", "CBI", "fuel, electricity, annual\nmedia refresh", ""],
  ["CBI", "2008", "CBI", "2008", "CBI", "water, nutrients, labor,\nelectricity", ""],
];

const line = "border-b border-r border-black align-bottom whitespace-pre";

const DataCell = ({ value, pad }: { value: string; pad: string }) => {
  if (value[0] === "$") {
    return (
      <td className={`${line} bg-[#ff0000] ${pad}`}>
        <span className="flex justify-between">
          <span>$</span>
          <span>{value.slice(1)}</span>
        </span>
      </td>
    );
  }
  if (value === "CBI") return <td className={`${line} bg-[#ff0000] text-center`}>CBI</td>;
  return <td className={`${line} bg-white ${value.length > 4 ? "px-[2px]" : "text-center"}`}>{value}</td>;
};

type CostProps = {
  cols: string[];
  active: string;
  help: string[];
  titles: string[];
  rows: string[][];
  s: { table: string; letters: string; ask: string; gap: string; head: string; help: string; title: string; row: string; pad: string };
};

const CostTable = ({ cols, active, help, titles, rows, s }: CostProps) => (
  <table className={`table-fixed border-separate border-spacing-0 border-l border-black text-left text-black ${s.table}`}>
    <colgroup>
      {cols.map((c, i) => <col key={i} className={c} />)}
    </colgroup>
    <tbody>
      <tr className={`${s.letters} font-['Open_Sans',sans-serif] text-[#444]`}>
        {letters.map((l) => (
          <th
            key={l}
            className={`border-b border-r border-r-[#b5b5b5] p-0 text-center align-bottom font-normal ${l === active ? "border-b-2 border-b-[#217346] bg-[#d2d2d2] text-[#217346]" : "border-b-[#999] bg-[#e6e6e6]"}`}
          >
            {l}
          </th>
        ))}
      </tr>
      <tr className={s.ask}>
        <td colSpan={6} className="whitespace-nowrap bg-[#ff0000] px-[2px] py-0">{question}</td>
        <td className="border-b border-l border-black bg-[#d9d9d9] px-[2px] py-0">Yes</td>
      </tr>
      <tr className={s.ask}>
        <td colSpan={7} className="whitespace-nowrap bg-[#ff0000] px-[2px] py-0">{direction}</td>
      </tr>
      <tr className={s.gap}>
        <td colSpan={7} className="border-b border-black bg-[#dce6f1] p-0" />
      </tr>
      <tr className={s.head}>
        <td colSpan={7} className="whitespace-nowrap border-b border-black bg-[#fcd5b4] px-[2px] py-0 font-bold">{heading}</td>
      </tr>
      <tr className={s.help}>
        {help.map((t, i) => <td key={i} className={`${line} bg-[#fcd5b4] px-[2px] py-0`}>{t}</td>)}
      </tr>
      <tr className={s.title}>
        {titles.map((t, i) => <th key={i} className={`${line} bg-[#fcd5b4] p-0 text-center font-bold`}>{t}</th>)}
      </tr>
      {rows.map((r, i) => (
        <tr key={i} className={s.row}>
          {r.map((v, j) => <DataCell key={j} value={v} pad={s.pad} />)}
        </tr>
      ))}
    </tbody>
  </table>
);

const arial = "font-['Liberation_Sans',Arial,sans-serif]";

/* ---------- left monitor ---------- */

const EnteredTable = () => (
  <table className={`w-[839px] table-fixed border-separate border-spacing-0 border-b-2 border-l-2 border-black text-[12px] leading-[15px] text-black ${arial}`}>
    <colgroup>
      <col className="w-[113px]" />
      <col className="w-[111px]" />
      <col className="w-[148px]" />
      <col className="w-[112px]" />
      <col className="w-[115px]" />
      <col className="w-[143px]" />
      <col className="w-[95px]" />
    </colgroup>
    <tbody>
      <tr className="h-[4px]">
        {letters.map((l) => <td key={l} className={`${line} bg-[#fcd5b4] p-0`} />)}
      </tr>
      <tr className="h-[77px]">
        {narrowTitles.map((t) => (
          <th key={t} className={`${line} overflow-hidden bg-[#fcd5b4] p-0 text-center font-bold`}>{t}</th>
        ))}
      </tr>
      {[["$3,875,000", "", "$65,000", "", "$425,000", "", ""], ["$6,000,000", "", "$92,500", "", "$120,000", "", ""]].map((r) => (
        <tr key={r[0]} className="h-[18px]">
          {r.map((v, j) => <DataCell key={j} value={v} pad="px-[6px]" />)}
        </tr>
      ))}
      <tr className="h-[9px]">
        {letters.map((l) => <td key={l} className={`${line} p-0`} />)}
      </tr>
    </tbody>
  </table>
);

const LeftMonitor = () => (
  <div className="flex min-w-0 flex-col overflow-hidden pt-[280px]">
    <WordHeader title="Example showing CBI entered.docx - Word" />
    <WordRibbon size="12" />
    <main className="flex min-h-0 flex-1 flex-col overflow-hidden bg-[#e6e6e6] pb-[15px] pl-[18px] pr-[33px]">
      <div className="min-h-0 flex-1 overflow-hidden border-x border-[#c6c6c6] bg-white pl-[138px]">
        <EnteredTable />
        <div className="h-[54px]" />
        <CostTable
          cols={["w-[105px]", "w-[104px]", "w-[138px]", "w-[104px]", "w-[108px]", "w-[134px]", "w-[99px]"]}
          active="CZ"
          help={wideHelp}
          titles={wideTitles}
          rows={wideRows}
          s={{
            table: `w-[792px] ${arial}`,
            letters: "h-[22px] text-[10px] leading-[14px]",
            ask: "h-[15px] text-[11px] leading-[14px]",
            gap: "h-[14px]",
            head: "h-[16px] text-[10px] leading-[14px]",
            help: "h-[102px] text-[9px] leading-[12px]",
            title: "h-[64px] text-[10px] leading-[12px]",
            row: "h-[26px] text-[10px] leading-[12px]",
            pad: "px-[4px]",
          }}
        />
      </div>
    </main>
    <WordStatus page="Page 2 of 2" words="22 words" zoom="160%" pos={57} />
    <Taskbar ghost />
  </div>
);

/* ---------- middle monitor ---------- */

const handles = [
  "-left-[5px] -top-[5px]",
  "left-1/2 -ml-[5px] -top-[5px]",
  "-right-[5px] -top-[5px]",
  "-left-[5px] top-1/2 -mt-[5px]",
  "-right-[5px] top-1/2 -mt-[5px]",
  "-left-[5px] -bottom-[5px]",
  "left-1/2 -ml-[5px] -bottom-[5px]",
  "-right-[5px] -bottom-[5px]",
];

const PicturePane = () => (
  <aside className="w-[255px] shrink-0 border-l border-[#c0c0c0] pl-3 pr-[12px] text-[#444]">
    <div className="flex h-[32px] items-center pt-[18px]">
      <h2 className="text-[18px] font-light leading-[24px] text-[#2b579a]">Format Picture</h2>
      <button aria-label="Pane options" className="ml-auto w-[38px]"><Caret /></button>
      <button aria-label="Close pane">
        <Svg w={9} h={9} vb="0 0 9 9"><path d="M1 1l7 7M8 1L1 8" stroke="#555" strokeWidth="1.800" /></Svg>
      </button>
    </div>
    <div className="flex h-[38px] items-end gap-[14px] pl-1">
      <Svg w={22} h={22} vb="0 0 22 22"><path d="M10 3L2 12l7 8 8-9zM9 1v9" fill="#fff" stroke="#666" /><path d="M13 5c5 2 7 6 6 13l-4-8z" fill="#666" /></Svg>
      <Svg w={22} h={22} vb="0 0 22 22"><path d="M11 1l9 7-3 11H5L2 8z" fill="#fff" stroke="#2b579a" /><path d="M5 17h12v2H5z" fill="#2b579a" /><path d="M6 19h10v3H6z" fill="#a5bbdc" /></Svg>
      <Svg w={22} h={22} vb="0 0 22 22"><path d="M7 1v4M20 1v4M7 3h13M1 7h4M1 21h4M3 7v14" stroke="#777" /><path d="M7 7h14v14H7z" fill="#666" /><path d="M14 9v10M9 14h10M12.500 10.500L14 9l1.500 1.500M12.500 17.500L14 19l1.500-1.500" stroke="#fff" /></Svg>
      <Svg w={22} h={22} vb="0 0 22 22"><path d="M1.500 1.500h19v19h-19z" fill="#fff" stroke="#777" /><path d="M2 19l7-10 5 7 2-3 4 6z" fill="#666" /><circle cx="15.500" cy="6.500" r="2" fill="#666" /></Svg>
    </div>
    <svg width="100%" height="8" className="mt-[6px]" aria-hidden="true">
      <path d="M0 7.500h46l5-6.500 5 6.500h300" fill="none" stroke="#c0c0c0" />
    </svg>
    <ul className="pt-[2px]">
      {["Shadow", "Reflection", "Glow", "Soft Edges", "3-D Format", "3-D Rotation", "Artistic Effects"].map((n) => (
        <li key={n}>
          <button className="flex h-[23px] items-center gap-[6px] pl-[8px] font-bold">
            <Svg w={5} h={8} vb="0 0 5 8"><path d="M.5.500v7L4.500 4z" fill="#fff" stroke="#888" /></Svg>
            {n}
          </button>
        </li>
      ))}
    </ul>
  </aside>
);

const serif = "font-['Liberation_Serif','Times_New_Roman',serif]";

const MiddleMonitor = () => (
  <div className="flex min-w-0 flex-col overflow-hidden">
    <WordHeader title="PCWP_ICR_survey_instructions_12-21-16DRAFT.docx - Word" wide />
    <WordRibbon size="11" wide />
    <main className="flex min-h-0 flex-1 overflow-hidden bg-[#e6e6e6]">
      <div className="flex min-w-0 flex-1 flex-col pl-[218px]">
        <div className="flex h-[412px] w-[1015px] shrink-0 border border-t-0 border-[#c6c6c6] bg-white">
          <div className="flex w-[731px] flex-col items-start border-r border-[#c6c6c6] pb-[29px] pl-[86px] pr-[84px] pt-[5px]">
            <div className="relative outline-1 outline-[#8a8a8a]">
              <div className="h-[211px] overflow-hidden">
                <CostTable
                  cols={["w-[74px]", "w-[73px]", "w-[97px]", "w-[74px]", "w-[77px]", "w-[95px]", "w-[70px]"]}
                  active="CZ"
                  help={wideHelp}
                  titles={wideTitles}
                  rows={wideRows}
                  s={{
                    table: `w-[560px] ${arial}`,
                    letters: "h-[17px] text-[7px] leading-[10px]",
                    ask: "h-[11px] text-[8px] leading-[10px]",
                    gap: "h-[10px]",
                    head: "h-[11px] text-[7px] leading-[9px]",
                    help: "h-[72px] text-[6px] leading-[8px]",
                    title: "h-[44px] text-[7px] leading-[9px]",
                    row: "h-[18px] text-[7px] leading-[8px]",
                    pad: "px-[4px]",
                  }}
                />
              </div>
              {handles.map((h) => (
                <span key={h} className={`absolute size-[10px] rounded-full border-2 border-[#8a8a8a] bg-white ${h}`} />
              ))}
              <button aria-label="Layout Options" className="absolute -right-[36px] top-0 flex size-[25px] items-center justify-center border border-[#ababab] bg-white">
                <Svg w={19} h={19} vb="0 0 19 19">
                  <path d="M1 1.500h17M1 4.500h17M1 7.500h3M15 7.500h3M1 10.500h3M15 10.500h3M1 13.500h17M1 16.500h17" stroke="#3f78b5" />
                  <path d="M5.500 12V9.500a4 3.500 0 0 1 8 0V12" stroke="#666" strokeWidth="2" />
                </Svg>
              </button>
            </div>
            <span className={`mt-auto self-center text-[14px] leading-[14px] text-[#7f7f7f] ${serif}`}>7</span>
          </div>
          <div className={`flex flex-1 text-black ${serif}`}>
            <span className="h-[87px] w-[2px] bg-[#3b9ad9]" />
            <div className="pl-[7px] text-[9px]">
              <p className="flex h-[17px] flex-col justify-end overflow-hidden whitespace-nowrap leading-[10px]">
                <span>otherwise we'll have to piecemeal something together for import (or</span>
                <span>otherwise take some time to figure out our procedure).</span>
              </p>
              <div className="ml-[21px] mt-[7px] whitespace-nowrap border-l border-[#c6c6c6] pl-[8px] leading-[11px]">
                <b className="block font-['Open_Sans',sans-serif] text-[10px] leading-[12px]">Hanks, Katie</b>
                Replaced the screen shot below to clarify they do not have to
                <br />
                remove their non-CBI.
              </div>
            </div>
          </div>
        </div>
        <div className="mt-[13px] flex min-h-0 w-[1015px] flex-1 overflow-hidden border border-b-0 border-[#c6c6c6] bg-white">
          <div className={`w-[731px] border-r border-[#c6c6c6] pl-[86px] pr-[86px] pt-[42px] ${serif}`}>
            <p className="text-right text-[14px] leading-[15px] text-[#7f7f7f]">
              OMB Control No. ____-____
              <br />
              Approval Expires __/__/__
            </p>
            <p className="mt-[26px] text-[14px] leading-[16px] text-black">Example 2: Example showing non-CBI response after removal of CBI:</p>
            <div className="ml-[6px] mt-[13px] w-[545px] overflow-hidden border-r border-t border-black">
              <CostTable
                cols={["w-[74px]", "w-[73px]", "w-[97px]", "w-[74px]", "w-[75px]", "w-[84px]", "w-[67px]"]}
                active="CY"
                help={narrowHelp}
                titles={narrowTitles}
                rows={cbiRows}
                s={{
                  table: `w-[544px] ${arial}`,
                  letters: "h-[14px] text-[8px] leading-[11px]",
                  ask: "h-[12px] text-[9px] leading-[11px]",
                  gap: "h-[12px]",
                  head: "h-[12px] text-[8px] leading-[10px]",
                  help: "h-[82px] text-[7px] leading-[9px]",
                  title: "h-[51px] text-[8px] leading-[10px]",
                  row: "h-[20px] text-[8px] leading-[9px]",
                  pad: "px-[4px]",
                }}
              />
            </div>
          </div>
        </div>
      </div>
      <PicturePane />
    </main>
    <WordStatus page="Page 7 of 128" words="41340 words" zoom="100%" pos={50} />
    <Taskbar tray />
  </div>
);

/* ---------- right monitor ---------- */

const excelTabs: Tab[] = [
  ["File", "w-[56px]"],
  ["Home", "w-[53px]"],
  ["Insert", "w-[54px]"],
  ["Page Layout", "w-[82px]"],
  ["Formulas", "w-[72px]"],
  ["Data", "w-[46px]"],
  ["Review", "w-[62px]"],
  ["View", "w-[44px]"],
  ["ACROBAT", "w-[78px]"],
];

const ExcelHeader = () => (
  <header className="relative shrink-0 bg-[#217346] text-white">
    <HeaderArt />
    <div className="flex h-[31px] items-center">
      <div className="flex flex-1 items-center">
        <button aria-label="Save" className="ml-[19px] w-[14px]"><SaveIcon /></button>
        <button aria-label="Undo" className="ml-3 w-[15px]"><UndoIcon /></button>
        <button aria-label="Undo list" className="w-3 pl-1"><Caret color="#fff" /></button>
        <button aria-label="Redo" className="ml-[5px] w-[15px]"><RedoIcon /></button>
        <button aria-label="Redo list" className="w-3 pl-[3px]"><Caret color="#4f9270" /></button>
        <button aria-label="Quick Print" className="ml-[5px]"><PrintIcon /></button>
        <button aria-label="Print Preview" className="ml-3"><PreviewIcon /></button>
        <button aria-label="Customize" className="ml-[13px]"><CustomizeIcon /></button>
      </div>
      <h1>PCWP_survey_5-22-17-CBI_ex.xlsx - Excel</h1>
      <div className="relative flex flex-1 items-center justify-end">
        <span className="pr-[9px]">Hanks, Katie</span>
        <WindowButtons color="#fff" />
      </div>
    </div>
    <div className="flex">
      <Tabs tabs={excelTabs} active="bg-[#f1f1f1] text-[#217346]" />
      <TellMe share="bg-[#0e5c2f]" />
    </div>
  </header>
);

const BigTool = ({ c, art, lines }: { c: string; art: React.ReactNode; lines: string[] }) => (
  <button className={`flex flex-col items-center pt-[6px] leading-[14px] ${c}`}>
    <span className="pb-[3px]">{art}</span>
    <span>{lines[0]}</span>
    <span className="flex h-[14px] items-center gap-[2px] whitespace-nowrap">{lines[1]}<Caret /></span>
  </button>
);

const ExcelRibbon = () => (
  <div className={ribbon}>
    <Group c="w-[76px]" label="Clipboard">
      <div className="flex">
        <PasteButton />
        <div className="pt-[3px]">
          <button aria-label="Cut" className={smallRow}><CutIcon /></button>
          <button aria-label="Copy" className={smallRow}><CopyIcon /><Caret /></button>
          <button aria-label="Format Painter" className={smallRow}><PainterIcon /></button>
        </div>
      </div>
    </Group>
    <Divider />
    <Group c="w-[185px]" label="Font">
      <div className="flex pl-[4px] pt-[10px]">
        <Combo c="w-[99px]" name="Font" value="Arial" />
        <Combo c="w-[38px]" name="Font size" value="10" />
        <Tool c="w-[23px]" name="Grow Font"><Grow up /></Tool>
        <Tool c="w-[19px]" name="Shrink Font"><Grow /></Tool>
      </div>
      <div className="flex pl-[4px] pt-[7px] text-[12px]">
        <Tool c="w-[18px]" name="Bold"><b>B</b></Tool>
        <Tool c="w-[22px]" name="Italic"><i className="font-['Liberation_Serif',serif] font-bold">I</i></Tool>
        <Tool c="w-[17px]" name="Underline"><u className="font-semibold">U</u></Tool>
        <Drop c="w-[13px]" />
        <Bar c="w-[6px]" />
        <Tool c="w-[20px]" name="Borders"><BordersIcon /></Tool>
        <Drop c="w-[10px]" />
        <Bar c="w-[9px]" />
        <Tool c="w-[20px]" name="Fill Color"><BucketIcon color="#ffff00" /></Tool>
        <Drop c="w-[9px]" />
        <Tool c="w-[22px]" name="Font Color"><FontColor /></Tool>
        <Drop c="w-[9px]" />
      </div>
    </Group>
    <Divider />
    <Group c="w-[236px]" label="Alignment">
      <div className="flex pl-[3px] pt-[10px]">
        <Tool c="w-[20px]" name="Top Align"><AlignIcon kind="top" /></Tool>
        <Tool c="w-[20px]" name="Middle Align"><AlignIcon kind="middle" /></Tool>
        <Tool c="w-[20px] bg-[#c5c5c5]" name="Bottom Align"><AlignIcon kind="bottom" /></Tool>
        <Bar c="w-[8px]" />
        <Tool c="w-[18px]" name="Orientation">
          <Svg w={15} h={15}>
            <text x="0" y="11" fontSize="10" fontWeight="600" fontFamily="Open Sans" fill="#666" transform="rotate(-40 6 9)">ab</text>
            <path d="M6 15l8-7M10.500 8H14v3.500" stroke="#666" strokeWidth="1.200" />
          </Svg>
        </Tool>
        <Drop c="w-[9px]" />
        <span className="w-[10px]" />
        <Bar c="w-[8px]" />
        <button className="flex h-5 items-center gap-[4px] pl-[4px]"><WrapIcon />Wrap Text</button>
      </div>
      <div className="flex pl-[3px] pt-[7px]">
        <Tool c="w-[20px]" name="Align Left"><AlignIcon kind="left" /></Tool>
        <Tool c="w-[20px] bg-[#c5c5c5]" name="Center"><AlignIcon kind="center" /></Tool>
        <Tool c="w-[20px]" name="Align Right"><AlignIcon kind="right" /></Tool>
        <Bar c="w-[8px]" />
        <Tool c="w-[18px]" name="Decrease Indent"><IndentIcon out /></Tool>
        <Tool c="w-[19px]" name="Increase Indent"><IndentIcon /></Tool>
        <Bar c="w-[8px]" />
        <button className="flex h-5 items-center gap-[4px] whitespace-nowrap pl-[4px]"><WrapIcon merge />Merge &amp; Center</button>
        <Drop c="w-[20px]" />
      </div>
    </Group>
    <Divider />
    <Group c="w-[125px]" label="Number">
      <div className="flex pl-[3px] pt-[10px]">
        <Combo c="w-[118px]" name="Number format" value="Custom" />
      </div>
      <div className="flex pl-[3px] pt-[7px] text-[13px]">
        <Tool c="w-[22px]" name="Accounting">$</Tool>
        <Drop c="w-[8px]" />
        <Tool c="w-[22px]" name="Percent">%</Tool>
        <Tool c="w-[16px]" name="Comma"><b>,</b></Tool>
        <Bar c="w-[10px]" />
        <Tool c="w-[20px]" name="Increase Decimal">
          <Svg w={16} h={16}>
            <path d="M6 4H1M3 2L1 4l2 2" stroke="#3f78b5" strokeWidth="1.400" />
            <text x="8" y="7" fontSize="8" fontFamily="Open Sans" fill="#444">.0</text>
            <text x="3" y="15" fontSize="8" fontFamily="Open Sans" fill="#444">.00</text>
          </Svg>
        </Tool>
        <Tool c="w-[20px]" name="Decrease Decimal">
          <Svg w={16} h={16}>
            <text x="2" y="7" fontSize="8" fontFamily="Open Sans" fill="#444">.00</text>
            <path d="M1 12h5M4 10l2 2-2 2" stroke="#3f78b5" strokeWidth="1.400" />
            <text x="8" y="15" fontSize="8" fontFamily="Open Sans" fill="#444">.0</text>
          </Svg>
        </Tool>
      </div>
    </Group>
    <Divider />
    <Group c="w-[161px]" label="Styles" launcher={false}>
      <div className="flex">
        <BigTool c="w-[70px]" art={<GridArt kind="conditional" />} lines={["Conditional", "Formatting"]} />
        <BigTool c="w-[46px]" art={<GridArt kind="table" />} lines={["Format as", "Table"]} />
        <BigTool c="w-[44px]" art={<GridArt kind="cell" />} lines={["Cell", "Styles"]} />
      </div>
    </Group>
    <Divider />
    <Group c="w-[121px]" label="Cells" launcher={false}>
      <div className="flex pl-[3px]">
        <BigTool c="w-[38px]" art={<CellsArt kind="insert" />} lines={["Insert", ""]} />
        <BigTool c="w-[38px]" art={<CellsArt kind="delete" />} lines={["Delete", ""]} />
        <BigTool c="w-[38px]" art={<CellsArt kind="format" />} lines={["Format", ""]} />
      </div>
    </Group>
    <Divider />
    <Group c="w-[167px]" label="Editing" launcher={false}>
      <div className="flex">
        <div className="w-[85px] pl-[5px] pt-[3px]">
          <button className={smallRow}>
            <Svg w={14} h={15}><path d="M14 4V1.500H2.500L9 8l-6.500 6.500H14V12" stroke="#555" strokeWidth="1.800" /></Svg>
            AutoSum<span className="pl-1"><Caret /></span>
          </button>
          <button className={smallRow}>
            <Svg w={14} h={15}><path d="M1.500 1.500h13v13h-13z" fill="#fff" stroke="#888" /><path d="M1 1h14v3H1z" fill="#888" /><path d="M8 5v8M5 10l3 3 3-3" stroke="#3f78b5" strokeWidth="1.600" /></Svg>
            Fill<Caret />
          </button>
          <button className={smallRow}><EraserIcon letter={false} />Clear<Caret /></button>
        </div>
        <BigTool c="w-[38px]" art={<FilterArt />} lines={["Sort &", "Filter"]} />
        <BigTool c="w-[40px]" art={<span className="block h-7"><SearchIcon big /></span>} lines={["Find &", "Select"]} />
      </div>
    </Group>
    <Divider />
    <CollapseButton c="flex-1 pr-[9px]" />
  </div>
);

const excelLetters = [...letters, "DC"];
const emptyRows = [17, 18, 19, 20, 21, 22, 23, 24, 25, 26, 27, 28, 29, 30, 31, 32, 33];

const RowHead = ({ n, on = false }: { n: number; on?: boolean }) => (
  <th
    className={`border-b border-r border-b-[#ababab] p-0 text-center align-bottom font-['Open_Sans',sans-serif] text-[11px] font-normal leading-[14px] ${on ? "border-r-2 border-r-[#217346] bg-[#d2d2d2] text-[#217346]" : "border-r-[#999] bg-[#e6e6e6] text-[#333]"}`}
  >
    {n}
  </th>
);

const ExcelGrid = () => (
  <table className={`w-full table-fixed border-separate border-spacing-0 text-left text-black ${arial}`}>
    <colgroup>
      <col className="w-[26px]" />
      <col className="w-[116px]" />
      <col className="w-[109px]" />
      <col className="w-[146px]" />
      <col className="w-[114px]" />
      <col className="w-[114px]" />
      <col className="w-[139px]" />
      <col className="w-[109px]" />
      <col />
    </colgroup>
    <tbody>
      <tr className="h-[17px] font-['Open_Sans',sans-serif] text-[11px] leading-[15px] text-[#333]">
        <th className="border-b border-r border-[#999] bg-[#e6e6e6] p-0">
          <span className="flex justify-end pr-[2px]">
            <Svg w={10} h={10} vb="0 0 10 10"><path d="M10 0v10H0z" fill="#b5b5b5" /></Svg>
          </span>
        </th>
        {excelLetters.map((l) => (
          <th
            key={l}
            className={`border-b border-r border-r-[#ababab] p-0 text-center font-normal ${l === "CX" ? "border-b-2 border-b-[#217346] bg-[#d2d2d2] text-[#217346]" : "border-b-[#999] bg-[#e6e6e6]"}`}
          >
            {l}
          </th>
        ))}
      </tr>
      <tr className="h-[19px] text-[13px] leading-[16px]">
        <RowHead n={1} />
        <td colSpan={6} className="whitespace-nowrap bg-[#ff0000] px-[2px] py-0">{question}</td>
        <td className="border-b border-l border-r border-black bg-[#d9d9d9] px-[2px] py-0 text-[12px]">Yes</td>
        <td className="bg-[#dce6f1] p-0" />
      </tr>
      <tr className="h-[18px] text-[13px] leading-[16px]">
        <RowHead n={2} />
        <td colSpan={7} className="whitespace-nowrap bg-[#ff0000] px-[2px] py-0">{direction}</td>
        <td className="bg-[#dce6f1] p-0" />
      </tr>
      <tr className="h-[18px]">
        <RowHead n={3} />
        <td colSpan={8} className="border-b border-black bg-[#dce6f1] p-0" />
      </tr>
      <tr className="h-[19px] text-[12px] font-bold leading-[16px]">
        <RowHead n={7} />
        <td colSpan={7} className="whitespace-nowrap border-b border-r-2 border-black bg-[#fcd5b4] px-[2px] py-0">{heading}</td>
        <td className="border-b border-black bg-[#fcd5b4] px-[2px] py-0">Comments</td>
      </tr>
      <tr className="h-[124px] text-[11px] leading-[14px]">
        <RowHead n={8} />
        {excelHelp.map((t, i) => (
          <td key={i} className={`${line} bg-[#fcd5b4] px-[2px] py-0 ${i === 6 ? "border-r-2" : ""}`}>
            <div className="flex max-h-[122px] flex-col justify-end overflow-hidden">{t}</div>
          </td>
        ))}
        <td className={`${line} overflow-hidden bg-[#fcd5b4] px-[2px] py-0`}>Optional. Enter any comments you have on the data</td>
      </tr>
      <tr className="h-[76px] text-[12px] leading-[15px]">
        <RowHead n={9} />
        {[...narrowTitles.slice(0, 6), "Annual O&M costs\nfor CPMS ($/yr)", "Comments"].map((t, i) => (
          <th key={i} className={`${line} bg-[#fcd5b4] p-0 text-center font-bold ${i === 6 ? "border-r-2" : ""}`}>
            {t}
          </th>
        ))}
      </tr>
      {excelRows.map((r, i) => (
        <tr key={i} className="h-[30px] text-[11px] leading-[15px]">
          <RowHead n={15 + i} />
          {r.slice(0, 6).map((v, j) => <DataCell key={j} value={v} pad="px-[6px]" />)}
          <td className={`${line} border-r-2 bg-white p-0`} />
          <td className={`${line} bg-white p-0`} />
        </tr>
      ))}
      {emptyRows.map((n) => (
        <tr key={n} className="h-[18px]">
          <RowHead n={n} on={n === 19} />
          {excelLetters.map((l) => (
            <td
              key={l}
              className={`${line} bg-white p-0 ${l === "DB" ? "border-r-2" : ""} ${n === 19 && l === "CX" ? "outline-2 outline-[#217346]" : ""}`}
            />
          ))}
        </tr>
      ))}
    </tbody>
  </table>
);

const sheetTabs: [string, string][] = [
  ["APCD (3)", "w-[68px] mr-[4px] bg-[#c0504d] text-white"],
  ["APCD (2)", "w-[68px] mr-[4px] bg-[#c0504d] text-white"],
  ["Mill", "w-[39px] mr-[4px] bg-[#c0504d] text-white"],
  ["Prod", "w-[43px] mr-[4px] bg-[#c0504d] text-white"],
  ["EquipDetail", "w-[82px] bg-[#c0504d] text-white"],
  ["ReleasePt", "w-[76px] border-r border-[#999] text-[#444]"],
  ["Permit", "w-[58px] mr-[3px] border-r border-[#999] text-[#444]"],
  ["Resin", "w-[47px] bg-[#c0504d] text-white"],
  ["Tank", "w-[50px] mr-[2px] border-r border-[#999] text-[#444]"],
  ["VeneerDry", "w-[76px] mr-[4px] bg-[#c0504d] text-white"],
  ["RotaryD", "w-[54px] bg-[#c0504d] text-white"],
];

const arrow = "flex items-center justify-center border border-[#ababab] bg-white";

const SheetBar = () => (
  <div className="flex h-[25px] shrink-0 items-center border-t border-[#999] bg-[#e6e6e6] text-[11px]">
    <button aria-label="Previous sheet" className="ml-[28px] w-[29px] text-left">
      <Svg w={4} h={7} vb="0 0 4 7"><path d="M4 0v7L0 3.500z" fill="#b5b5b5" /></Svg>
    </button>
    <button aria-label="Next sheet" className="w-[33px]">
      <Svg w={4} h={7} vb="0 0 4 7"><path d="M0 0v7l4-3.500z" fill="#0e6b38" /></Svg>
    </button>
    <button className="mr-[2px] h-[22px] w-[72px] self-start border-b-2 border-[#217346] bg-[linear-gradient(#fff,#f0c6c5)] font-bold text-[#217346]">APCD (4)</button>
    {sheetTabs.map(([name, look]) => (
      <button key={name} className={`h-5 shrink-0 overflow-hidden whitespace-nowrap text-center ${look}`}>{name}</button>
    ))}
    <span className="w-6 text-center font-bold text-[#217346]">...</span>
    <button aria-label="New sheet" className="ml-1">
      <Svg w={16} h={16}><circle cx="8" cy="8" r="7.300" stroke="#888" /><path d="M8 4.500v7M4.500 8h7" stroke="#777" strokeWidth="1.500" /></Svg>
    </button>
    <span className="flex-1 text-center text-[#999]">⋮</span>
    <div className="mr-[20px] flex h-[14px] w-[203px] bg-[#dadada]">
      <button aria-label="Scroll left" className={`w-[14px] ${arrow}`}><Svg w={4} h={7} vb="0 0 4 7"><path d="M4 0v7L0 3.500z" fill="#666" /></Svg></button>
      <span className="ml-auto mr-[2px] w-[16px] border border-[#ababab] bg-white" />
      <button aria-label="Scroll right" className={`w-[14px] ${arrow}`}><Svg w={4} h={7} vb="0 0 4 7"><path d="M0 0v7l4-3.500z" fill="#666" /></Svg></button>
    </div>
  </div>
);

const RightMonitor = () => (
  <div className="flex min-w-0 flex-col overflow-hidden pb-[50px]">
    <ExcelHeader />
    <ExcelRibbon />
    <div className="flex h-[42px] shrink-0 items-center bg-[#e6e6e6] pl-[5px] pr-[6px]">
      <label className="relative block w-[92px]">
        <input aria-label="Name Box" defaultValue="CX19" className="h-[23px] w-full border border-[#c6c6c6] bg-white pl-[5px] text-[11px] text-[#444]" />
        <span className="pointer-events-none absolute right-[6px] top-[10px]"><Caret /></span>
      </label>
      <span className="w-[26px] text-center text-[#999]">⋮</span>
      <div className="flex h-[23px] w-[99px] items-center justify-around border border-[#c6c6c6] bg-white">
        <button aria-label="Cancel"><Svg w={11} h={11} vb="0 0 11 11"><path d="M1 1l9 9M10 1l-9 9" stroke="#c0c0c0" strokeWidth="1.600" /></Svg></button>
        <button aria-label="Enter"><Svg w={12} h={11} vb="0 0 12 11"><path d="M1 6l3.500 4L11 1" stroke="#c0c0c0" strokeWidth="2" /></Svg></button>
        <button aria-label="Insert Function" className="font-['Liberation_Serif',serif] text-[14px] font-bold italic leading-[16px] text-[#666]">fx</button>
      </div>
      <label className="relative ml-[3px] block flex-1">
        <input aria-label="Formula Bar" className="h-[23px] w-full border border-[#c6c6c6] bg-white" />
        <span className="pointer-events-none absolute right-1 top-[9px]">
          <Svg w={8} h={6} vb="0 0 8 6"><path d="M1 1l3 3.500L7 1" stroke="#666" strokeWidth="1.600" /></Svg>
        </span>
      </label>
    </div>
    <main className="flex min-h-0 flex-1 overflow-hidden bg-[#e6e6e6]">
      <div className="min-w-0 flex-1 overflow-hidden">
        <ExcelGrid />
      </div>
      <div className="w-[20px] shrink-0 pl-[3px] pr-[3px] pt-[2px]">
        <div className="flex h-full flex-col bg-[#dadada]">
          <button aria-label="Scroll up" className={`h-[14px] shrink-0 ${arrow}`}><Svg w={7} h={4} vb="0 0 7 4"><path d="M0 4h7L3.500 0z" fill="#666" /></Svg></button>
          <span className="mt-px h-[190px] border border-[#ababab] bg-white" />
          <button aria-label="Scroll down" className={`mt-auto h-[14px] shrink-0 ${arrow}`}><Svg w={7} h={4} vb="0 0 7 4"><path d="M0 0h7L3.500 4z" fill="#666" /></Svg></button>
        </div>
      </div>
    </main>
    <SheetBar />
    <footer className={statusBar}>
      <span className="pl-[7px]">Ready</span>
      <Zoom
        icons={["M1 1h14v14H1zM1 5.500h14M1 10.500h14M5.500 1v14M10.500 1v14", "M1 1h14v14H1zM4 4h8v8H4zM6 6.500h4M6 9.500h4", "M1 1h14v14H1zM1 9h10V1M6 1v8"]}
        on={0}
        zoom="100%"
        pos={50}
      />
    </footer>
    <Taskbar />
  </div>
);

const App = () => {
  return (
    <div className="grid h-screen grid-cols-[1366fr_1920fr_1280fr] grid-rows-1 overflow-hidden bg-black font-['Open_Sans',sans-serif] text-[10px] leading-[14px]">
      <LeftMonitor />
      <MiddleMonitor />
      <RightMonitor />
    </div>
  );
};

export default App;
